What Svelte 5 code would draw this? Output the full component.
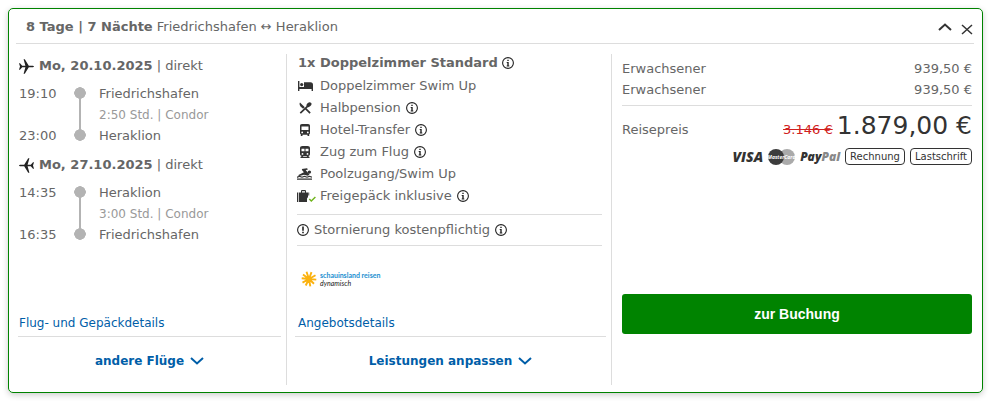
<script>
  const legs = [
    { date: 'Mo, 20.10.2025', dep: '19:10', from: 'Friedrichshafen', duration: '2:50 Std.', arr: '23:00', to: 'Heraklion', back: false },
    { date: 'Mo, 27.10.2025', dep: '14:35', from: 'Heraklion', duration: '3:00 Std.', arr: '16:35', to: 'Friedrichshafen', back: true },
  ];

  const services = [
    { icon: 'bed', label: 'Doppelzimmer Swim Up', info: false },
    { icon: 'food', label: 'Halbpension', info: true },
    { icon: 'bus', label: 'Hotel-Transfer', info: true },
    { icon: 'train', label: 'Zug zum Flug', info: true },
    { icon: 'swim', label: 'Poolzugang/Swim Up', info: false },
    { icon: 'luggage', label: 'Freigepäck inklusive', info: true },
  ];

  const travellers = [
    { label: 'Erwachsener', price: '939,50 €' },
    { label: 'Erwachsener', price: '939,50 €' },
  ];
</script>

{#snippet info()}
  <button class="info" type="button" aria-label="Information">
    <svg width="12" height="12" viewBox="0 0 12 12">
      <circle cx="6" cy="6" r="5.4" fill="none" stroke="#222" stroke-width="1.1" />
      <path d="M5.3 2.7h1.4v1.3H5.3zM4.700 5h2v3.500h.6v.9H4.700v-.9h.6V5.900h-.6z" fill="#222" />
    </svg>
  </button>
{/snippet}

{#snippet chevron()}
  <svg width="14" height="8" viewBox="0 0 14 8">
    <path d="M1 1l6 5.5L13 1" fill="none" stroke="currentColor" stroke-width="2" />
  </svg>
{/snippet}

<article class="offer">
  <header>
    <div><strong>8 Tage | 7 Nächte</strong> Friedrichshafen ↔ Heraklion</div>
    <div class="tools">
      <button type="button" aria-label="Zuklappen">
        <svg width="14" height="8" viewBox="0 0 14 8">
          <path d="M1 7l6-5.5L13 7" fill="none" stroke="#333" stroke-width="2" />
        </svg>
      </button>
      <button type="button" aria-label="Schließen">
        <svg width="12" height="16" viewBox="0 0 12 16">
          <path d="M1 6l10 9M11 6L1 15" fill="none" stroke="#333" stroke-width="1.5" />
        </svg>
      </button>
    </div>
  </header>

  <div class="columns">
    <section class="flights">
      {#each legs as leg}
        <div class="leg">
          <div class="leg-head">
            <svg class:back={leg.back} width="15" height="15" viewBox="0 0 15 15">
              <path d="M0 4.300h1l2.200 2.400h3.200L4.600.3h1.200l4 6.400h3.400c1 0 1.800.3 1.800.8s-.8.8-1.800.8H9.800l-4 6.400H4.600l1.800-6.400H3.200L1 10.700H0l1-3.200z" fill="#222" />
            </svg>
            <span><strong>{leg.date}</strong> | direkt</span>
          </div>
          <div class="route">
            <span>{leg.dep}</span>
            <span class="rail"></span>
            <span>{leg.from}</span>
            <span class="duration">{leg.duration} | Condor</span>
            <span>{leg.arr}</span>
            <span>{leg.to}</span>
          </div>
        </div>
      {/each}
      <div class="bottom">
        <a class="details" href="#flug">Flug- und Gepäckdetails</a>
        <button class="more" type="button">andere Flüge {@render chevron()}</button>
      </div>
    </section>

    <section class="room">
      <h2>1x Doppelzimmer Standard {@render info()}</h2>
      <ul>
        {#each services as service}
          <li>
            <span class="icon">
              {#if service.icon === 'bed'}
                <svg width="16" height="10" viewBox="0 0 16 10">
                  <path d="M1 0h1.400v6H7V1.200h6.500A2.500 2.500 0 0 1 16 3.700V10h-1.400V8H2.400v2H1z" fill="#333" />
                  <circle cx="4.700" cy="3.600" r="1.600" fill="#333" />
                </svg>
              {:else if service.icon === 'food'}
                <svg width="16" height="12" viewBox="0 0 16 12">
                  <path d="M3 .6l4.800 4.600-1.700 1.600-2.600-2.400C2.400 3.200 2.300 1.600 3 .6z" fill="#333" />
                  <path d="M3.300 11.200L11 3.800M8.400 6.400l4.700 4.800" fill="none" stroke="#333" stroke-width="1.7" />
                  <ellipse cx="12" cy="2.700" rx="2.800" ry="2" transform="rotate(-45 12 2.700)" fill="#333" />
                </svg>
              {:else if service.icon === 'bus'}
                <svg width="16" height="12" viewBox="0 0 15 12">
                  <path fill-rule="evenodd" d="M4.500 0h6C12 0 12.500.8 12.500 2v7.500l-.8.8V12H10v-1.300H5V12H3.300v-1.700l-.8-.8V2C2.500.8 3 0 4.500 0zM4 2.400V6h7V2.400zM4.700 7.500a.9.9 0 1 0 0 1.800.9.9 0 0 0 0-1.800zM10.300 7.500a.9.9 0 1 0 0 1.800.9.9 0 0 0 0-1.800z" fill="#333" />
                </svg>
              {:else if service.icon === 'train'}
                <svg width="16" height="12" viewBox="0 0 15 12">
                  <path fill-rule="evenodd" d="M5 0h5c1.700 0 2.500.8 2.500 2.200V8c0 1.200-.7 2-1.800 2l1.300 1v1H3v-1l1.300-1c-1.100 0-1.800-.8-1.800-2V2.200C2.500.8 3.300 0 5 0zM4 2.800v2.500h3V2.800zM8 2.800v2.500h3V2.800zM5 7a.9.9 0 1 0 0 1.800A.9.9 0 0 0 5 7zM10 7a.9.9 0 1 0 0 1.800A.9.9 0 0 0 10 7zM6 10.200l-.8.8h4.600l-.8-.8z" fill="#333" />
                </svg>
              {:else if service.icon === 'swim'}
                <svg width="15" height="12" viewBox="0 0 15 12">
                  <path d="M4.800.9l5.100-.7 1.200 1.100-2.400 1 3.800 4-1.500 1.500L7 6.700 2.400 8 1 7.300l5.900-3.100-1.600-1.800z" fill="#333" />
                  <circle cx="12.400" cy="4.100" r="1.700" fill="#333" />
                  <path d="M0 9.200c1.300 0 1.300-.8 2.500-.8s1.300.8 2.500.8 1.300-.8 2.500-.8 1.300.8 2.500.8 1.300-.8 2.500-.8 1.300.8 2.500.8M0 11.200h15" fill="none" stroke="#333" stroke-width="1.200" />
                </svg>
              {:else}
                <svg width="19" height="13" viewBox="0 0 19 13">
                  <path fill-rule="evenodd" d="M0 2.500h1.300V12H0zM2 2.500h2V1.300C4 .5 4.500 0 5.300 0h2.400C8.500 0 9 .5 9 1.300v1.200h2V7l-1 1.500V12H2zM5 1.200v1.300h3V1.200zM11.300 2.500h.9v3h-.9z" fill="#333" />
                  <path d="M12.300 9l2 2L18.400 7" fill="none" stroke="#6fb41c" stroke-width="1.400" />
                </svg>
              {/if}
            </span>
            {service.label}
            {#if service.info}{@render info()}{/if}
          </li>
        {/each}
      </ul>
      <div class="cancel">
        <svg width="12" height="12" viewBox="0 0 12 12">
          <circle cx="6" cy="6" r="5.400" fill="none" stroke="#222" stroke-width="1.100" />
          <path d="M5.200 2.500h1.600v4.200H5.200zM5.200 7.700h1.600v1.500H5.200z" fill="#222" />
        </svg>
        Stornierung kostenpflichtig {@render info()}
      </div>
      <div class="operator">
        <svg width="16" height="16" viewBox="0 0 16 16">
          <path d="M8 8L5.500.8M8 8l2.500-6.800M8 8l6.500-3.800M8 8l7.300.6M8 8l5 4.800M8 8l1.300 7.300M8 8l-3.300 6.500M8 8l-6.500 3.700M8 8L.7 7.200M8 8L2 3.500" stroke="#fbb20f" stroke-width="1.900" />
        </svg>
        <div>
          <div class="brand">schauinsland reisen</div>
          <div class="sub">dynamisch</div>
        </div>
      </div>
      <div class="bottom">
        <a class="details" href="#angebot">Angebotsdetails</a>
        <button class="more" type="button">Leistungen anpassen {@render chevron()}</button>
      </div>
    </section>

    <section class="price">
      <div class="travellers">
        {#each travellers as traveller}
          <div class="line"><span>{traveller.label}</span><span>{traveller.price}</span></div>
        {/each}
      </div>
      <div class="line total">
        <span>Reisepreis</span>
        <span><s>3.146 €</s> <span class="amount">1.879,00 €</span></span>
      </div>
      <div class="payments">
        <span class="visa">VISA</span>
        <svg width="27" height="16" viewBox="0 0 27 16">
          <circle cx="19" cy="8" r="8" fill="#aaa" />
          <circle cx="8" cy="8" r="8" fill="#3c3c3c" />
          <text x="13.500" y="10" text-anchor="middle" fill="#fff">MasterCard</text>
        </svg>
        <span class="paypal">Pay<span>Pal</span></span>
        <span class="badge">Rechnung</span>
        <span class="badge">Lastschrift</span>
      </div>
      <button class="book" type="button">zur Buchung</button>
    </section>
  </div>
</article>

<style>
  :global(body) {
    background: #fff;
  }

  .offer {
    margin: 8px 12px 10px 8px;
    padding: 0 8px 7px 7px;
    border: 1px solid #008300;
    border-radius: 5px;
    box-shadow: 0 2px 6px rgba(0, 0, 0, 0.2);
    color: #666;
    font: 13px/22px Verdana, "DejaVu Sans", sans-serif;
  }

  header {
    display: flex;
    justify-content: space-between;
    align-items: center;
    height: 32px;
    padding: 2px 1px 0 10px;
    border-bottom: 1px solid #ddd;
  }

  button {
    padding: 0;
    border: 0;
    background: none;
    font: inherit;
    cursor: pointer;
  }

  svg {
    flex: none;
    display: block;
  }

  .tools {
    display: flex;
    align-items: center;
    gap: 9px;
  }

  .columns {
    display: grid;
    grid-template-columns: 271fr 325fr 362fr;
    padding-top: 10px;
    white-space: nowrap;
  }

  section {
    display: flex;
    flex-direction: column;
    min-height: 331px;
    box-sizing: border-box;
  }

  .flights,
  .room {
    border-right: 1px solid #ddd;
  }

  .flights {
    padding: 1px 5px 0 2px;
  }

  .leg {
    padding: 0 1px 7px;
  }

  .leg-head {
    display: flex;
    align-items: center;
    gap: 5px;
    margin-bottom: 6px;
  }

  .back {
    transform: scaleX(-1);
  }

  .route {
    display: grid;
    grid-template-columns: 55px 25px 1fr;
    grid-template-rows: 21px 21px 22px;
    align-items: center;
  }

  .rail {
    grid-column: 2;
    grid-row: 1 / 4;
    align-self: stretch;
    width: 12px;
    margin: 4px 0 6px;
    background:
      radial-gradient(circle at 6px 6px, #b3b3b3 5.5px, transparent 6px) top / 12px 12px no-repeat,
      radial-gradient(circle at 6px 6px, #b3b3b3 5.5px, transparent 6px) bottom / 12px 12px no-repeat,
      linear-gradient(#b3b3b3, #b3b3b3) center / 2px 80% no-repeat;
  }

  .duration {
    grid-column: 3;
    color: #999;
    font-size: 12px;
  }

  .bottom {
    margin-top: auto;
  }

  .details {
    display: block;
    padding: 0 1px 2px;
    border-bottom: 1px solid #ddd;
    color: #005ea8;
    font-size: 12px;
    text-decoration: none;
  }

  .more {
    display: flex;
    align-items: center;
    justify-content: center;
    gap: 6px;
    width: 100%;
    height: 48px;
    color: #005ea8;
    font-size: 12px;
    font-weight: bold;
  }

  .room {
    padding: 0 5px 0 8px;
  }

  .room .details {
    padding: 0 3px 2px;
  }

  h2 {
    display: flex;
    align-items: center;
    gap: 4px;
    height: 18px;
    margin: 0 3px 3px;
    font-size: 13px;
  }

  ul {
    margin: 0 4px 0 2px;
    padding: 0 0 7px;
    border-bottom: 1px solid #ddd;
    list-style: none;
  }

  li,
  .cancel {
    display: flex;
    align-items: center;
    gap: 5px;
  }

  li {
    height: 22px;
  }

  .icon {
    width: 18px;
  }

  .cancel {
    height: 30px;
    margin: 0 4px 0 2px;
    border-bottom: 1px solid #ddd;
  }

  .operator {
    display: flex;
    align-items: center;
    gap: 3px;
    margin: 25px 6px 0;
    font: 7px/8px Lato, sans-serif;
  }

  .brand {
    color: #1b8fd0;
    font-weight: bold;
  }

  .sub {
    color: #222;
    font-style: italic;
  }

  .price {
    padding: 4px 2px 0 10px;
  }

  .line {
    display: flex;
    justify-content: space-between;
    align-items: baseline;
    line-height: 21px;
  }

  .travellers {
    padding-bottom: 5px;
    border-bottom: 1px solid #ddd;
  }

  .total {
    height: 42px;
    line-height: 40px;
  }

  s {
    color: #d02020;
  }

  .amount {
    color: #333;
    font-size: 25px;
  }

  .payments {
    display: flex;
    justify-content: flex-end;
    align-items: center;
    gap: 5px;
    height: 17px;
    color: #333;
  }

  .payments text {
    font: italic bold 5px "Open Sans", sans-serif;
  }

  .visa {
    font: italic 800 14px/17px "Open Sans", sans-serif;
  }

  .paypal {
    font: italic 800 12px/17px "Open Sans", sans-serif;
  }

  .paypal span {
    color: #888;
  }

  .badge {
    padding: 0 4px;
    border: 1px solid #333;
    border-radius: 4px;
    font-size: 10px;
    line-height: 15px;
  }

  .book {
    height: 40px;
    margin-top: 129px;
    border-radius: 3px;
    background: #008300;
    color: #fff;
    font: bold 14px "Liberation Sans", Arial, sans-serif;
  }
</style>
